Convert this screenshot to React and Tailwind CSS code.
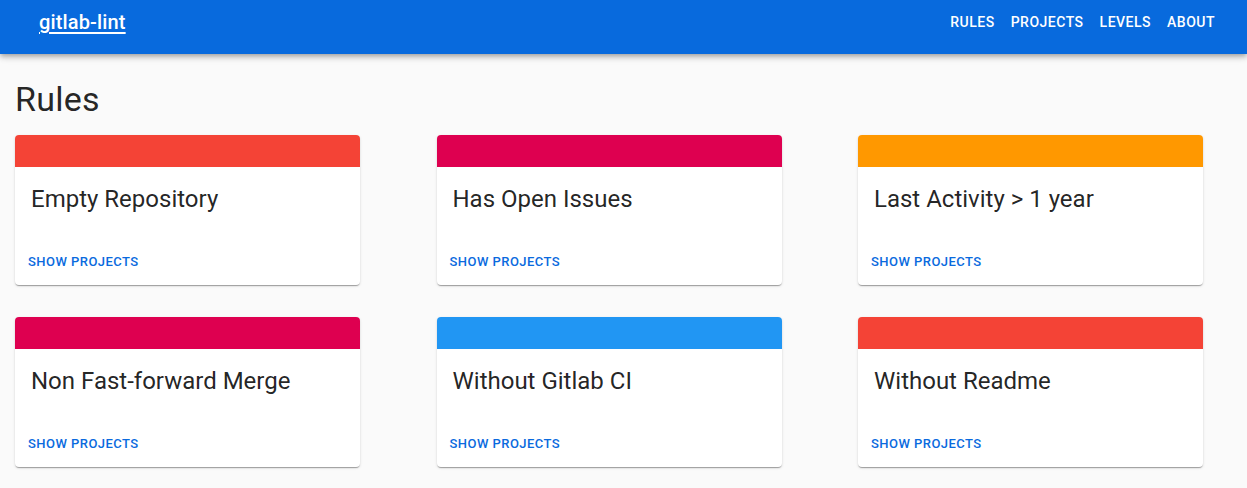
import React from 'react';

const rules = [
  { name: 'Empty Repository', color: 'bg-[#f44336]' },
  { name: 'Has Open Issues', color: 'bg-[#de0050]' },
  { name: 'Last Activity > 1 year', color: 'bg-[#ff9800]' },
  { name: 'Non Fast-forward Merge', color: 'bg-[#de0050]' },
  { name: 'Without Gitlab CI', color: 'bg-[#2196f3]' },
  { name: 'Without Readme', color: 'bg-[#f44336]' },
];

const links = ['Rules', 'Projects', 'Levels', 'About'];

function RuleCard({ rule }) {
  return (
    <div className="w-[345px] h-[150px] flex flex-col bg-white rounded-[4px] overflow-hidden shadow-[0_2px_1px_-1px_rgba(0,0,0,0.2),0_1px_1px_0_rgba(0,0,0,0.14),0_1px_3px_0_rgba(0,0,0,0.12)]">
      <div className={`h-8 ${rule.color}`} />
      <div className="p-4">
        <h5 className="text-[24px] leading-[32px] text-[rgba(0,0,0,0.87)]">{rule.name}</h5>
      </div>
      <div className="mt-auto px-2 pt-2 pb-[7px]">
        <button className="px-[5px] py-1 text-[13px] leading-[22.75px] font-medium uppercase tracking-[0.46px] text-[#0a6ade] rounded">
          Show projects
        </button>
      </div>
    </div>
  );
}

export default function App() {
  return (
    <div className="min-h-[488px] bg-[#fafafa] font-['Roboto',sans-serif]">
      <header className="h-[54px] bg-[#086add] shadow-[0_2px_4px_-1px_rgba(0,0,0,0.2),0_4px_5px_0_rgba(0,0,0,0.14),0_1px_10px_0_rgba(0,0,0,0.12)] flex items-start justify-between pl-[39px] pr-[24px] pt-[8px]">
        <a className="text-white text-[20px] leading-[28px] font-medium tracking-[0.15px] underline underline-offset-[3px] decoration-[1.5px]">
          gitlab-lint
        </a>
        <nav className="flex -mt-px">
          {links.map((l) => (
            <button key={l} className="px-2 py-[3px] text-white text-[14px] leading-[24px] font-medium uppercase tracking-[0.5px]">
              {l}
            </button>
          ))}
        </nav>
      </header>

      <main className="px-[15px] pt-[24px] pb-8">
        <h4 className="text-[34px] leading-[42px] text-[rgba(0,0,0,0.87)] tracking-[0.25px] mb-[15px]">Rules</h4>
        <div className="grid grid-cols-[repeat(3,421.5px)] gap-y-8">
          {rules.map((r) => (
            <RuleCard key={r.name} rule={r} />
          ))}
        </div>
      </main>
    </div>
  );
}
